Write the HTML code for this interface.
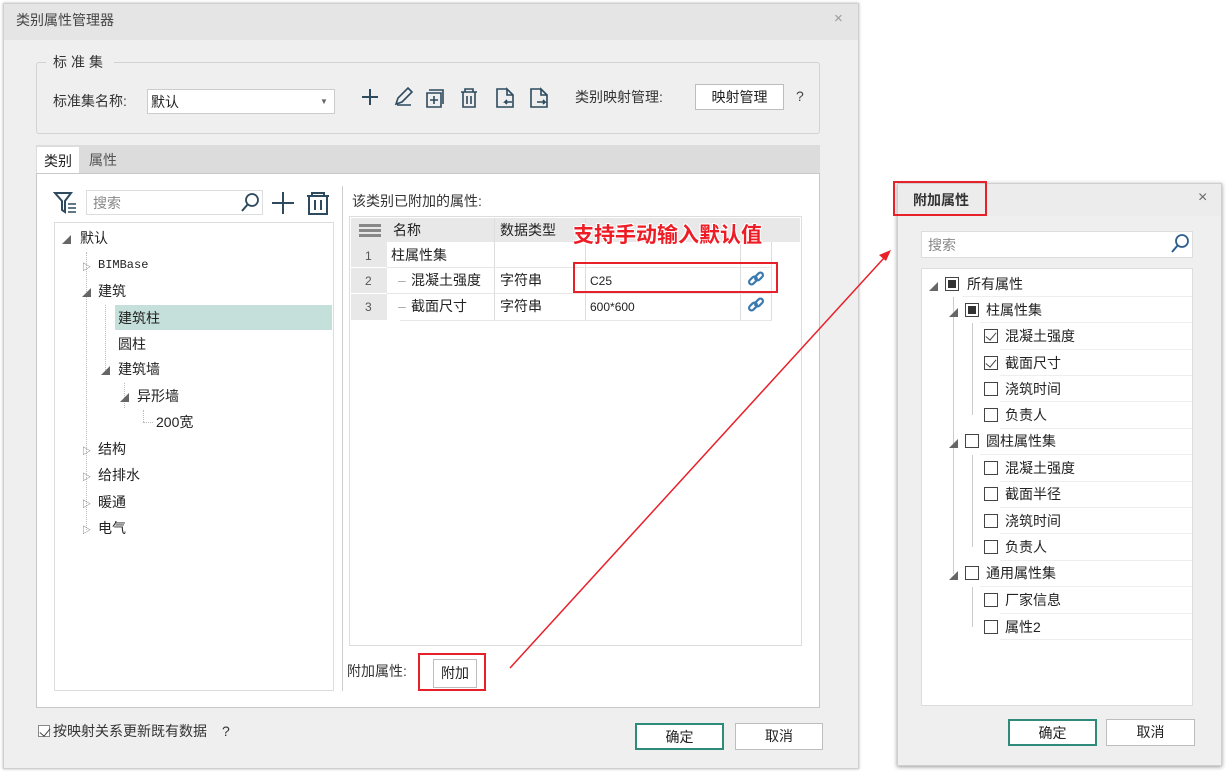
<!DOCTYPE html>
<html><head><meta charset="utf-8"><style>
*{margin:0;padding:0;box-sizing:border-box}
body{width:1229px;height:771px;background:#fff;position:relative;overflow:hidden;font-family:"Liberation Sans","Noto Sans CJK SC",sans-serif;font-size:14px;color:#222}
div,span{position:absolute}
.t{white-space:nowrap;line-height:16px}
.btn{background:#fff;border:1px solid #bdbdbd;text-align:center;font-size:14px}
.cb{width:14px;height:14px;border:1px solid #444;background:#fff}
.cb.f::after{content:"";position:absolute;left:2px;top:2px;width:8px;height:8px;background:#333}
.cb.c::after{content:"";position:absolute;left:3px;top:0px;width:5px;height:9px;border-right:1.5px solid #444;border-bottom:1.5px solid #444;transform:rotate(40deg)}
.tri{font-size:9px;color:#666}
</style></head><body>
<div style="left:3px;top:3px;width:856px;height:766px;background:#efefef;border:1px solid #cfcfcf;box-shadow:0 0 3px #bbb"></div>
<div style="left:4px;top:4px;width:854px;height:36px;background:#e5e5e5"></div>
<div class="t" style="left:16px;top:12px;color:#444">类别属性管理器</div>
<div class="t" style="left:834px;top:11px;color:#999;font-size:15px">×</div>
<div style="left:36px;top:62px;width:784px;height:72px;border:1px solid #d3d3d3;border-radius:3px"></div>
<div class="t" style="left:46px;top:54px;background:#efefef;padding:0 7px;letter-spacing:4px;color:#333">标准集</div>
<div class="t" style="left:53px;top:93px;color:#333">标准集名称:</div>
<div style="left:147px;top:89px;width:188px;height:25px;background:#fff;border:1px solid #ccc"></div>
<div class="t" style="left:151px;top:94px">默认</div>
<div class="t" style="left:320px;top:94px;font-size:8px;color:#666">▼</div>
<svg style="position:absolute;left:355px;top:84px" width="205" height="28" viewBox="0 0 205 28" fill="none" stroke="#2d4a5e" stroke-width="2">
<path d="M15 5v16M7 13h16"/>
<path d="M42 21h14M41 20l2-6 10-10 4 4-10 10z" stroke-width="1.6"/>
<path d="M74 6h14v14M72 9h14v14H72z M79 12v8M75 16h8" stroke-width="1.6"/>
<path d="M106 8h16M110 8V5h8v3M108 8v15h12V8M112 12v8M116 12v8" stroke-width="1.6"/>
<path d="M152 5h-10v18h16V11l-6-6v6h6M157 18h-7l2-2M150 18l2 2" stroke-width="1.6"/>
<path d="M186 5h-10v18h16V11l-6-6v6h6M182 18h8l-2-2M190 18l-2 2" stroke-width="1.6"/>
</svg>
<div class="t" style="left:575px;top:89px;color:#333">类别映射管理:</div>
<div class="btn" style="left:695px;top:84px;width:89px;height:26px;line-height:24px">映射管理</div>
<div class="t" style="left:796px;top:88px;color:#444">?</div>
<div style="left:36px;top:145px;width:784px;height:28px;background:#dcdcdc"></div>
<div style="left:37px;top:147px;width:42px;height:27px;background:#fff"></div>
<div class="t" style="left:44px;top:153px">类别</div>
<div class="t" style="left:89px;top:152px;color:#555">属性</div>
<div style="left:36px;top:173px;width:784px;height:535px;background:#fff;border:1px solid #c8c8c8"></div>
<svg style="position:absolute;left:53px;top:190px" width="26" height="25"><path d="M2 3h16l-6 8v11l-3-2v-9z" fill="none" stroke="#2d4a5e" stroke-width="2"/><path d="M15 14h8M15 18h8M15 22h8" stroke="#2d4a5e" stroke-width="1.5"/></svg>
<div style="left:86px;top:190px;width:177px;height:25px;border:1px solid #ddd"></div>
<div class="t" style="left:93px;top:195px;color:#888">搜索</div>
<svg style="position:absolute;left:240px;top:192px" width="22" height="22"><circle cx="12" cy="8" r="6" fill="none" stroke="#2d4a5e" stroke-width="1.8"/><path d="M8 12l-6 7" stroke="#2d4a5e" stroke-width="2"/></svg>
<svg style="position:absolute;left:270px;top:190px" width="62" height="26"><path d="M13 2v22M2 13h22" stroke="#2d4a5e" stroke-width="2"/><path d="M37 6h22M42 6V3h12v3M39 6v18h18V6M45 10v10M51 10v10" fill="none" stroke="#2d4a5e" stroke-width="2"/></svg>
<div style="left:54px;top:222px;width:280px;height:469px;border:1px solid #ddd"></div>
<div style="left:342px;top:186px;width:1px;height:505px;background:#ccc"></div>
<div style="left:86px;top:252px;width:0;height:278px;border-left:1px dotted #bbb"></div>
<div style="left:105px;top:305px;width:0;height:65px;border-left:1px dotted #bbb"></div>
<div style="left:124px;top:383px;width:0;height:25px;border-left:1px dotted #bbb"></div>
<div style="left:143px;top:410px;width:0;height:12px;border-left:1px dotted #bbb"></div>
<div style="left:143px;top:422px;width:10px;border-top:1px dotted #bbb"></div>
<div style="left:115px;top:305px;width:217px;height:25px;background:#c5e0da"></div>
<div class="t tri" style="left:62px;top:232px">◢</div><div class="t" style="left:80px;top:230px">默认</div>
<div class="t tri" style="left:82px;top:259px">▷</div><div class="t" style="left:98px;top:257px;font-family:'Liberation Mono',monospace;font-size:12px">BIMBase</div>
<div class="t tri" style="left:82px;top:285px">◢</div><div class="t" style="left:98px;top:283px">建筑</div>
<div class="t" style="left:118px;top:310px">建筑柱</div>
<div class="t" style="left:118px;top:336px">圆柱</div>
<div class="t tri" style="left:101px;top:363px">◢</div><div class="t" style="left:118px;top:361px">建筑墙</div>
<div class="t tri" style="left:120px;top:390px">◢</div><div class="t" style="left:137px;top:388px">异形墙</div>
<div class="t" style="left:156px;top:414px">200宽</div>
<div class="t tri" style="left:82px;top:443px">▷</div><div class="t" style="left:98px;top:441px">结构</div>
<div class="t tri" style="left:82px;top:469px">▷</div><div class="t" style="left:98px;top:467px">给排水</div>
<div class="t tri" style="left:82px;top:496px">▷</div><div class="t" style="left:98px;top:494px">暖通</div>
<div class="t tri" style="left:82px;top:522px">▷</div><div class="t" style="left:98px;top:520px">电气</div>
<div class="t" style="left:352px;top:193px;color:#333">该类别已附加的属性:</div>
<div style="left:349px;top:216px;width:453px;height:430px;border:1px solid #ddd"></div>
<div style="left:351px;top:218px;width:449px;height:24px;background:#e8e8e8"></div>
<div style="left:359px;top:224px;width:22px;height:3px;background:#888;box-shadow:0 5px 0 #888,0 10px 0 #888"></div>
<div class="t" style="left:393px;top:222px">名称</div>
<div style="left:494px;top:218px;width:1px;height:102px;background:#ddd"></div>
<div class="t" style="left:500px;top:222px">数据类型</div>
<div style="left:585px;top:218px;width:1px;height:102px;background:#ddd"></div>
<div style="left:740px;top:242px;width:1px;height:78px;background:#ddd"></div>
<div style="left:771px;top:242px;width:1px;height:78px;background:#ddd"></div>
<div style="left:351px;top:242px;width:36px;height:78px;background:#e8e8e8"></div>
<div style="left:387px;top:267px;width:385px;height:1px;background:#e6e6e6"></div>
<div style="left:387px;top:293px;width:385px;height:1px;background:#e6e6e6"></div>
<div style="left:400px;top:320px;width:372px;height:1px;background:#e6e6e6"></div>
<div style="left:351px;top:267px;width:36px;height:1px;background:#fff"></div>
<div style="left:351px;top:293px;width:36px;height:1px;background:#fff"></div>
<div class="t" style="left:365px;top:248px;font-size:12px;color:#555">1</div>
<div class="t" style="left:365px;top:273px;font-size:12px;color:#555">2</div>
<div class="t" style="left:365px;top:299px;font-size:12px;color:#555">3</div>
<div class="t" style="left:391px;top:247px">柱属性集</div>
<div class="t" style="left:398px;top:272px;color:#aaa">–</div><div class="t" style="left:411px;top:272px">混凝土强度</div>
<div class="t" style="left:398px;top:298px;color:#aaa">–</div><div class="t" style="left:411px;top:298px">截面尺寸</div>
<div class="t" style="left:500px;top:272px">字符串</div>
<div class="t" style="left:500px;top:298px">字符串</div>
<div class="t" style="left:590px;top:273px;font-size:12px">C25</div>
<div class="t" style="left:590px;top:299px;font-size:12px">600*600</div>
<svg style="position:absolute;left:747px;top:270px" width="18" height="18"><g fill="none" stroke="#3a7ab0" stroke-width="2.2"><rect x="1.5" y="8" width="9" height="5" rx="2.5" transform="rotate(-45 6 10.5)"/><rect x="7.5" y="4" width="9" height="5" rx="2.5" transform="rotate(-45 12 6.5)"/></g></svg>
<svg style="position:absolute;left:747px;top:296px" width="18" height="18"><g fill="none" stroke="#3a7ab0" stroke-width="2.2"><rect x="1.5" y="8" width="9" height="5" rx="2.5" transform="rotate(-45 6 10.5)"/><rect x="7.5" y="4" width="9" height="5" rx="2.5" transform="rotate(-45 12 6.5)"/></g></svg>
<div style="left:573px;top:262px;width:205px;height:31px;border:2.5px solid #e8202a"></div>
<div class="t" style="left:573px;top:223px;font-size:21px;line-height:26px;font-weight:bold;color:#ee1c25;text-shadow:0 0 2px #fff,1px 1px 0 #fff,-1px -1px 0 #fff,1px -1px 0 #fff,-1px 1px 0 #fff">支持手动输入默认值</div>
<div class="t" style="left:347px;top:663px;color:#333">附加属性:</div>
<div class="btn" style="left:433px;top:659px;width:44px;height:29px;line-height:27px">附加</div>
<div style="left:418px;top:653px;width:68px;height:38px;border:2.5px solid #e8202a"></div>
<div class="cb c" style="left:38px;top:725px;width:12px;height:12px;border-color:#888"></div>
<div class="t" style="left:53px;top:723px;color:#333">按映射关系更新既有数据</div>
<div class="t" style="left:222px;top:723px;color:#333">?</div>
<div class="btn" style="left:635px;top:723px;width:89px;height:27px;line-height:24px;border:2px solid #2e8b7a">确定</div>
<div class="btn" style="left:735px;top:723px;width:88px;height:27px;line-height:25px">取消</div>
<svg style="position:absolute;left:0;top:0" width="1229" height="771"><path d="M510 668L884 258" stroke="#e8202a" stroke-width="1.5"/><path d="M891 250l-12 5 7 6z" fill="#e8202a"/></svg>
<div style="left:897px;top:183px;width:325px;height:583px;background:#efefef;border:1px solid #cfcfcf;box-shadow:0 1px 4px #999"></div>
<div style="left:898px;top:184px;width:323px;height:32px;background:#ececec"></div>
<div class="t" style="left:913px;top:192px;font-weight:bold;color:#333">附加属性</div>
<div style="left:893px;top:181px;width:94px;height:35px;border:2.5px solid #e8202a"></div>
<div class="t" style="left:1198px;top:190px;color:#666;font-size:16px">×</div>
<div style="left:921px;top:231px;width:272px;height:27px;background:#fff;border:1px solid #ddd"></div>
<div class="t" style="left:928px;top:237px;color:#888">搜索</div>
<svg style="position:absolute;left:1169px;top:233px" width="22" height="22"><circle cx="13" cy="8" r="6" fill="none" stroke="#2d5f8e" stroke-width="1.8"/><path d="M9 12l-6 7" stroke="#2d5f8e" stroke-width="2"/></svg>
<div style="left:921px;top:268px;width:272px;height:438px;background:#fff;border:1px solid #ddd"></div>
<div style="left:953px;top:297px;width:0;height:277px;border-left:1px solid #ccc"></div>
<div style="left:972px;top:323px;width:0;height:92px;border-left:1px solid #ccc"></div>
<div style="left:972px;top:455px;width:0;height:92px;border-left:1px solid #ccc"></div>
<div style="left:972px;top:587px;width:0;height:40px;border-left:1px solid #ccc"></div>
<div class="t tri" style="left:929px;top:279px">◢</div><div class="cb f" style="left:945px;top:277px"></div><div class="t" style="left:967px;top:276px">所有属性</div>
<div class="t tri" style="left:949px;top:305px">◢</div><div class="cb f" style="left:965px;top:303px"></div><div class="t" style="left:986px;top:302px">柱属性集</div>
<div class="cb c" style="left:984px;top:329px"></div><div class="t" style="left:1005px;top:328px">混凝土强度</div>
<div class="cb c" style="left:984px;top:356px"></div><div class="t" style="left:1005px;top:355px">截面尺寸</div>
<div class="cb" style="left:984px;top:382px"></div><div class="t" style="left:1005px;top:381px">浇筑时间</div>
<div class="cb" style="left:984px;top:408px"></div><div class="t" style="left:1005px;top:407px">负责人</div>
<div class="t tri" style="left:949px;top:436px">◢</div><div class="cb" style="left:965px;top:434px"></div><div class="t" style="left:986px;top:433px">圆柱属性集</div>
<div class="cb" style="left:984px;top:461px"></div><div class="t" style="left:1005px;top:460px">混凝土强度</div>
<div class="cb" style="left:984px;top:487px"></div><div class="t" style="left:1005px;top:486px">截面半径</div>
<div class="cb" style="left:984px;top:514px"></div><div class="t" style="left:1005px;top:513px">浇筑时间</div>
<div class="cb" style="left:984px;top:540px"></div><div class="t" style="left:1005px;top:539px">负责人</div>
<div class="t tri" style="left:949px;top:568px">◢</div><div class="cb" style="left:965px;top:566px"></div><div class="t" style="left:986px;top:565px">通用属性集</div>
<div class="cb" style="left:984px;top:593px"></div><div class="t" style="left:1005px;top:592px">厂家信息</div>
<div class="cb" style="left:984px;top:620px"></div><div class="t" style="left:1005px;top:619px">属性2</div>
<div style="left:962px;top:296px;width:230px;height:1px;background:#eee"></div>
<div style="left:980px;top:322px;width:212px;height:1px;background:#eee"></div>
<div style="left:1000px;top:349px;width:192px;height:1px;background:#eee"></div>
<div style="left:1000px;top:375px;width:192px;height:1px;background:#eee"></div>
<div style="left:1000px;top:401px;width:192px;height:1px;background:#eee"></div>
<div style="left:1000px;top:428px;width:192px;height:1px;background:#eee"></div>
<div style="left:980px;top:454px;width:212px;height:1px;background:#eee"></div>
<div style="left:1000px;top:481px;width:192px;height:1px;background:#eee"></div>
<div style="left:1000px;top:507px;width:192px;height:1px;background:#eee"></div>
<div style="left:1000px;top:533px;width:192px;height:1px;background:#eee"></div>
<div style="left:1000px;top:560px;width:192px;height:1px;background:#eee"></div>
<div style="left:980px;top:586px;width:212px;height:1px;background:#eee"></div>
<div style="left:1000px;top:613px;width:192px;height:1px;background:#eee"></div>
<div style="left:1000px;top:639px;width:192px;height:1px;background:#eee"></div>
<div class="btn" style="left:1008px;top:719px;width:89px;height:27px;line-height:24px;border:2px solid #2e8b7a">确定</div>
<div class="btn" style="left:1106px;top:719px;width:89px;height:27px;line-height:25px">取消</div>
</body></html>
